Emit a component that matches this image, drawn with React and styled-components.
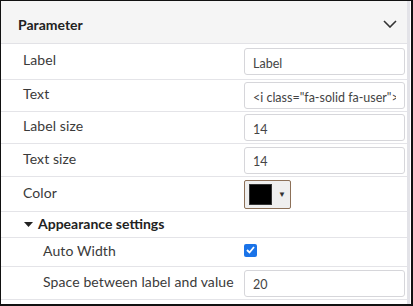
import React from 'react';
import styled, { createGlobalStyle } from 'styled-components';

const GlobalStyle = createGlobalStyle`
  html, body {
    margin: 0;
    padding: 0;
    background: #fff;
  }
  body {
    font-family: Lato, "Noto Sans", sans-serif;
    color: #333;
  }
`;

const Frame = styled.div`
  box-sizing: border-box;
  width: 413px;
  height: 306px;
  border-top: 1px solid #111;
  border-left: 1px solid #111;
  border-right: 2px solid #111;
  border-bottom: 2px solid #111;
  padding-right: 1px;
  overflow: hidden;
`;

const Panel = styled.div`
  height: 100%;
  border-right: 3px solid #e3e3e8;
`;

const Header = styled.div`
  display: flex;
  align-items: center;
  justify-content: space-between;
  height: 43px;
  padding: 4px 10px 0 17px;
  box-sizing: border-box;
  background: #f5f5f5;
  border-bottom: 1px solid #e2e2e6;
`;

const Title = styled.span`
  font-size: 14px;
  font-weight: 700;
  color: #222;
`;

const Row = styled.div`
  display: grid;
  grid-template-columns: ${p => (p.$sub ? 201 : 221)}px 161px;
  align-items: center;
  height: ${p => p.$h}px;
  padding-left: ${p => (p.$sub ? 42 : 22)}px;
  border-bottom: 1px solid #e4e4e8;
`;

const Label = styled.span`
  font-size: 14px;
  letter-spacing: 0.1px;
  color: #3a3a3a;
  padding-bottom: 4px;
  white-space: nowrap;
`;

const Input = styled.input`
  box-sizing: border-box;
  width: 161px;
  height: 27px;
  padding: 3px 8px 0 8px;
  border: 1px solid #d6d6da;
  border-radius: 3px;
  font-family: inherit;
  font-size: 12.5px;
  color: #444;
  background: #fff;
  outline: none;
`;

const ColorButton = styled.div`
  box-sizing: border-box;
  display: flex;
  align-items: center;
  gap: 6px;
  width: 47px;
  height: 29px;
  padding: 0 4px;
  background: #efefef;
  border: 1px solid #8c7058;
  border-radius: 2px;
`;

const Swatch = styled.div`
  width: 24px;
  height: 19px;
  background: #000;
  border: 1px solid #333;
`;

const Caret = styled.span`
  font-size: 8px;
  color: #333;
`;

const SectionRow = styled.div`
  display: flex;
  align-items: center;
  gap: 5px;
  height: 25px;
  padding-left: 23px;
  border-bottom: 1px solid #e4e4e8;
`;

const SectionTitle = styled.span`
  font-size: 14px;
  font-weight: 700;
  color: #222;
  padding-bottom: 2px;
`;

const Check = styled.div`
  width: 13px;
  height: 13px;
  border-radius: 2px;
  background: #1a73e8;
  display: flex;
  align-items: center;
  justify-content: center;
  margin-bottom: 4px;
`;

const Chevron = () => (
  <svg width="14" height="8" viewBox="0 0 14 8">
    <path d="M1 1 L7 7 L13 1" fill="none" stroke="#333" strokeWidth="1.6" />
  </svg>
);

export default function App() {
  return (
    <Frame>
      <GlobalStyle />
      <Panel>
        <Header>
          <Title>Parameter</Title>
          <Chevron />
        </Header>
        <Row $h={35}>
          <Label>Label</Label>
          <Input defaultValue="Label" />
        </Row>
        <Row $h={31}>
          <Label>Text</Label>
          <Input defaultValue={'<i class="fa-solid fa-user"></i>'} />
        </Row>
        <Row $h={31}>
          <Label>Label size</Label>
          <Input defaultValue="14" />
        </Row>
        <Row $h={32}>
          <Label>Text size</Label>
          <Input defaultValue="14" />
        </Row>
        <Row $h={34}>
          <Label>Color</Label>
          <ColorButton>
            <Swatch />
            <Caret>▼</Caret>
          </ColorButton>
        </Row>
        <SectionRow>
          <svg width="9" height="5" viewBox="0 0 9 5">
            <path d="M0 0 H9 L4.5 5 Z" fill="#222" />
          </svg>
          <SectionTitle>Appearance settings</SectionTitle>
        </SectionRow>
        <Row $h={28} $sub>
          <Label>Auto Width</Label>
          <Check>
            <svg width="9" height="8" viewBox="0 0 9 8">
              <path d="M1 4 L3.5 6.5 L8 1" fill="none" stroke="#fff" strokeWidth="1.8" />
            </svg>
          </Check>
        </Row>
        <Row $h={32} $sub>
          <Label>Space between label and value</Label>
          <Input defaultValue="20" />
        </Row>
      </Panel>
    </Frame>
  );
}
